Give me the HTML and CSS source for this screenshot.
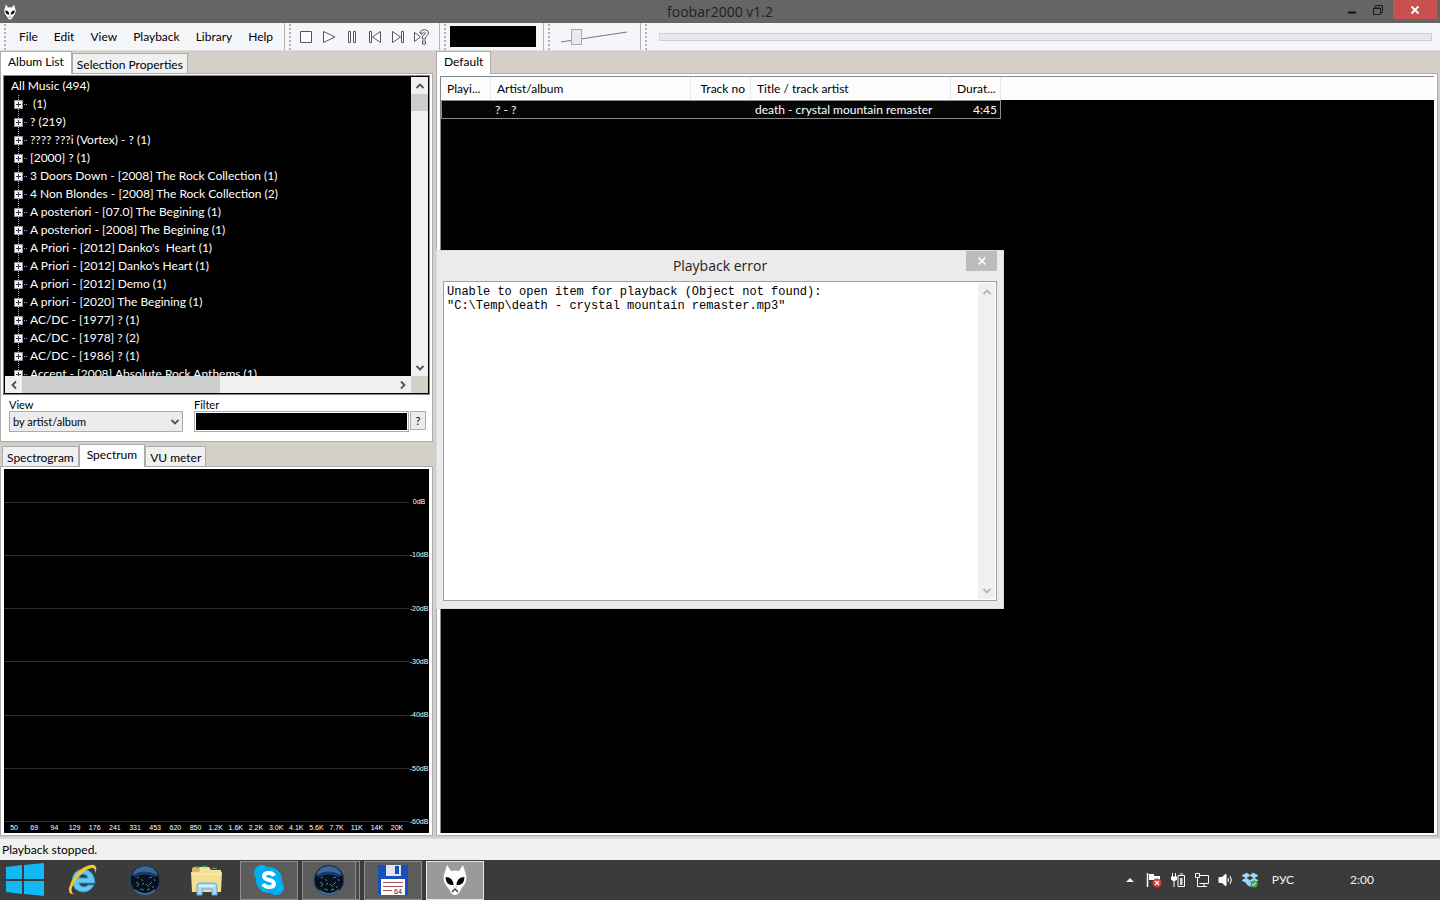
FILE: index.html
```html
<!DOCTYPE html>
<html lang="en">
<head>
  <meta charset="UTF-8" />
  <meta name="viewport" content="width=device-width, initial-scale=1.0"/>
  <title>foobar2000 v1.2</title>
  <link rel="stylesheet" href="styles.css">
</head>
<body>
  <!-- shared icons -->
  <svg class="defs" aria-hidden="true">
    <symbol id="alien" viewBox="0 0 24 30">
      <path d="M4 0 L8 6 Q12 5 16 6 L20 0 L23 10 Q25 17 18 24 Q16 30 12 30 Q8 30 6 24 Q-1 17 1 10Z" fill="#fff"/>
      <path d="M2.500 12 Q10 12 10.500 20 Q3 21 2.500 12Z M21.500 12 Q14 12 13.500 20 Q21 21 21.500 12Z" fill="#000"/>
      <path d="M9 27 L12 24 L15 27" fill="none" stroke="#333" stroke-width="1.300"/>
      <path d="M10.500 22 h.8 M12.800 22 h.8" stroke="#555"/>
    </symbol>
    <symbol id="orb" viewBox="0 0 32 32">
      <circle cx="16" cy="16" r="15" fill="#07101f" stroke="#294966"/>
      <path d="M3 12 Q6 2 16 2 Q26 2 29 12 Q16 5 3 12Z" fill="#39699a"/>
      <path d="M5 12 Q15 6 27 12" fill="none" stroke="#163d68" stroke-width="3"/>
      <path d="M7 18 l3 2 -2 3 M12 15 l2 2 M20 14 l3 -1 M23 18 l-3 3 M11 25 l4 1 M17 20 l3 3 M25 22 l-2 2" fill="none" stroke="#5f7d55"/>
      <path d="M13 21 l2 -2 M8 14 l2 -1 M18 26 l3 -1 M25 15 l1 2" stroke="#6889b4"/>
      <path d="M6 26 Q16 34 26 26" fill="none" stroke="#416b92" stroke-width="2"/>
    </symbol>
    <symbol id="up" viewBox="0 0 10 10"><path d="M1.500 7 L5 3.500 L8.500 7" fill="none" stroke="currentColor" stroke-width="1.800"/></symbol>
    <symbol id="down" viewBox="0 0 10 10"><path d="M1.500 3 L5 6.500 L8.500 3" fill="none" stroke="currentColor" stroke-width="1.800"/></symbol>
    <symbol id="left" viewBox="0 0 10 10"><path d="M7 1.500 L3.500 5 L7 8.500" fill="none" stroke="currentColor" stroke-width="1.800"/></symbol>
    <symbol id="right" viewBox="0 0 10 10"><path d="M3 1.500 L6.500 5 L3 8.500" fill="none" stroke="currentColor" stroke-width="1.800"/></symbol>
  </svg>

  <header class="titlebar">
    <svg class="app-icon"><use href="#alien"/></svg>
    <h1>foobar2000 v1.2</h1>
    <div class="window-buttons">
      <button aria-label="Minimize"><svg width="12" height="12"><path d="M2 8.500 h8" stroke="#111" stroke-width="2"/></svg></button>
      <button aria-label="Restore"><svg width="12" height="12" fill="none" stroke="#1a1a1a"><path d="M3.500 3 V1.500 H10.500 V8.500 H9"/><path d="M1.500 4 h7 v6.500 h-7z M1 4.500 h8"/></svg></button>
      <button class="close" aria-label="Close"><svg width="12" height="12"><path d="M2.500 2.500 l7 7 M9.500 2.500 l-7 7" stroke="#fff" stroke-width="1.800"/></svg></button>
    </div>
  </header>

  <div class="toolbar">
    <nav class="band menu">
      <button>File</button>
      <button>Edit</button>
      <button>View</button>
      <button>Playback</button>
      <button>Library</button>
      <button>Help</button>
    </nav>
    <div class="band transport">
      <button aria-label="Stop"><svg viewBox="0 0 16 16"><path d="M2.500 2.500 h11 v11 h-11z"/></svg></button>
      <button aria-label="Play"><svg viewBox="0 0 16 16"><path d="M2.500 2.500 L14 8 L2.500 13.500z"/></svg></button>
      <button aria-label="Pause"><svg viewBox="0 0 16 16"><path d="M4.500 2.500 h2 v11 h-2z M9.500 2.500 h2 v11 h-2z"/></svg></button>
      <button aria-label="Previous"><svg viewBox="0 0 16 16"><path d="M2.500 2.500 h2 v11 h-2z M13.500 2.500 v11 L5.500 8z"/></svg></button>
      <button aria-label="Next"><svg viewBox="0 0 16 16"><path d="M11.500 2.500 h2 v11 h-2z M2.500 2.500 v11 L10.500 8z"/></svg></button>
      <button aria-label="Random"><svg viewBox="0 0 16 16"><path d="M1.500 3.500 v9 L7.500 8z M6.500 3.500 L9.500 6"/><path d="M7 3.500 Q8 .5 11.500 .5 Q15.500 1 15.500 4 Q15.500 6 12.500 8 V10 H9.500 V8 Q9.500 6.500 12 5 Q13 3.500 11.500 3 Q10 3 9.500 4.500z M9.500 12 h3 v3 h-3z"/></svg></button>
    </div>
    <div class="band vis"><div class="vis-screen"></div></div>
    <div class="band volume">
      <svg viewBox="0 0 68 18"><path d="M1 14 L67 4" stroke="#777"/></svg>
      <input type="range" aria-label="Volume" min="0" max="100" value="19">
    </div>
    <div class="band seek">
      <input type="range" aria-label="Seek" min="0" max="100" value="0">
    </div>
  </div>

  <main class="workspace">
    <aside class="sidebar">
      <section class="panel library">
        <div class="tabs" role="tablist">
          <button class="tab active" role="tab">Album List</button>
          <button class="tab" role="tab">Selection Properties</button>
        </div>
        <div class="page">
          <div class="tree-box">
            <div class="tree">
              <div class="root">All Music (494)</div>
              <ul>
                <li><button aria-label="Expand"></button><span>&nbsp;(1)</span></li>
                <li><button aria-label="Expand"></button><span>? (219)</span></li>
                <li><button aria-label="Expand"></button><span>???? ???i (Vortex) - ? (1)</span></li>
                <li><button aria-label="Expand"></button><span>[2000] ? (1)</span></li>
                <li><button aria-label="Expand"></button><span>3 Doors Down - [2008] The Rock Collection (1)</span></li>
                <li><button aria-label="Expand"></button><span>4 Non Blondes - [2008] The Rock Collection (2)</span></li>
                <li><button aria-label="Expand"></button><span>A posteriori - [07.0] The Begining (1)</span></li>
                <li><button aria-label="Expand"></button><span>A posteriori - [2008] The Begining (1)</span></li>
                <li><button aria-label="Expand"></button><span>A Priori - [2012] Danko's&nbsp; Heart (1)</span></li>
                <li><button aria-label="Expand"></button><span>A Priori - [2012] Danko's Heart (1)</span></li>
                <li><button aria-label="Expand"></button><span>A priori - [2012] Demo (1)</span></li>
                <li><button aria-label="Expand"></button><span>A priori - [2020] The Begining (1)</span></li>
                <li><button aria-label="Expand"></button><span>AC/DC - [1977] ? (1)</span></li>
                <li><button aria-label="Expand"></button><span>AC/DC - [1978] ? (2)</span></li>
                <li><button aria-label="Expand"></button><span>AC/DC - [1986] ? (1)</span></li>
                <li><button aria-label="Expand"></button><span>Accent - [2008] Absolute Rock Anthems (1)</span></li>
              </ul>
            </div>
            <div class="scroll vertical">
              <button aria-label="Scroll up"><svg><use href="#up"/></svg></button>
              <div class="thumb"></div>
              <button class="end" aria-label="Scroll down"><svg><use href="#down"/></svg></button>
            </div>
            <div class="scroll horizontal">
              <button aria-label="Scroll left"><svg><use href="#left"/></svg></button>
              <div class="thumb"></div>
              <button class="end" aria-label="Scroll right"><svg><use href="#right"/></svg></button>
            </div>
            <div class="corner"></div>
          </div>
          <form class="filter-form">
            <div class="field view-field">
              <label for="view">View</label>
              <div class="select-wrap">
                <select id="view"><option>by artist/album</option></select>
                <svg><use href="#down"/></svg>
              </div>
            </div>
            <div class="field filter-field">
              <label for="filter">Filter</label>
              <div class="filter-row">
                <input type="text" id="filter">
                <button type="button">?</button>
              </div>
            </div>
          </form>
        </div>
      </section>

      <section class="panel analysis">
        <div class="tabs" role="tablist">
          <button class="tab" role="tab">Spectrogram</button>
          <button class="tab active" role="tab">Spectrum</button>
          <button class="tab" role="tab">VU meter</button>
        </div>
        <div class="page">
          <div class="spectrum">
            <div class="levels">
              <div>0dB</div>
              <div>-10dB</div>
              <div>-20dB</div>
              <div>-30dB</div>
              <div>-40dB</div>
              <div>-50dB</div>
              <div>-60dB</div>
            </div>
            <div class="freqs">
              <span>50</span><span>69</span><span>94</span><span>129</span><span>176</span><span>241</span><span>331</span><span>453</span><span>620</span><span>850</span><span>1.2K</span><span>1.6K</span><span>2.2K</span><span>3.0K</span><span>4.1K</span><span>5.6K</span><span>7.7K</span><span>11K</span><span>14K</span><span>20K</span>
            </div>
          </div>
        </div>
      </section>
    </aside>

    <section class="panel playlist">
      <div class="tabs" role="tablist">
        <button class="tab active" role="tab">Default</button>
      </div>
      <div class="page">
        <div class="tracks">
          <table>
            <colgroup><col class="c-playing"><col class="c-wide"><col class="c-no"><col class="c-wide"><col class="c-time"><col></colgroup>
            <thead>
              <tr><th>Playi...</th><th>Artist/album</th><th class="num">Track no</th><th>Title / track artist</th><th class="num">Durat...</th><th></th></tr>
            </thead>
            <tbody>
              <tr><td></td><td>? - ?</td><td></td><td>death - crystal mountain remaster</td><td class="num">4:45</td><td></td></tr>
            </tbody>
          </table>
        </div>
      </div>
    </section>

    <div class="dialog" role="dialog" aria-labelledby="dialogTitle">
      <div class="dialog-title">
        <h2 id="dialogTitle">Playback error</h2>
        <button aria-label="Close"><svg width="10" height="10"><path d="M1.500 1.500 l7 7 M8.500 1.500 l-7 7" stroke="#fff" stroke-width="1.600"/></svg></button>
      </div>
      <div class="message">
        <pre>Unable to open item for playback (Object not found):
"C:\Temp\death - crystal mountain remaster.mp3"</pre>
        <div class="scroll vertical disabled">
          <button aria-label="Scroll up"><svg><use href="#up"/></svg></button>
          <button class="end" aria-label="Scroll down"><svg><use href="#down"/></svg></button>
        </div>
      </div>
    </div>
  </main>

  <footer class="status">Playback stopped.</footer>

  <div class="taskbar">
    <div class="launch">
      <button class="start" aria-label="Start">
        <svg width="40" height="34" viewBox="0 0 40 34" fill="#12b9f5"><path d="M1 4 L17 2 V16 H1z M19 2 L39 0 V16 H19z M1 18 H17 V31 L1 29z M19 18 H39 V33 L19 31z"/></svg>
      </button>
      <button aria-label="Internet Explorer">
        <svg width="34" height="34" viewBox="0 0 34 34">
          <path d="M28 22 Q24 29 17 29 Q7 28 6 18 Q7 7 17 6 Q28 7 29 20 H13 Q14 24 18 24 Q21 24 22 22z M13 15 H22 Q21 11 17 11 Q14 11 13 15z" fill="#61c9f3" fill-rule="evenodd" stroke="#2a9bd6"/>
          <path d="M8 31 Q2 32 3 25 Q6 13 17 5 Q28 -1 30 4 Q31 7 29 11 Q30 4 25 5 Q15 8 8 20 Q3 29 8 31z" fill="#f7c52b"/>
        </svg>
      </button>
      <button aria-label="Browser"><svg width="32" height="32"><use href="#orb"/></svg></button>
      <button aria-label="File Explorer">
        <svg width="34" height="32" viewBox="0 0 34 32">
          <path d="M3 3 h10 l2 3 h5 v22 H2 V5z" fill="#d9b85f"/>
          <path d="M10 3 h9 l2 3 h10 v4 H9z" fill="#f6dfa0"/>
          <path d="M5 3 h4 M12 2.500 h5 M22 4.500 h5" stroke="#3d9a4e" stroke-width="1.500"/>
          <path d="M1 8 H32 L31 28 H2z" fill="#f5df94"/>
          <path d="M2 10 H31" stroke="#fff3c5"/>
          <path d="M7 31 V22 Q7 19 10 19 H24 Q27 19 27 22 V31 H22 V25 H12 V31z" fill="#a7dcf3" stroke="#62a9ce"/>
          <path d="M9 22 h16" stroke="#e8f8ff" stroke-width="1.500"/>
        </svg>
      </button>
      <button class="running" aria-label="Skype">
        <svg width="32" height="32" viewBox="0 0 32 32"><circle cx="16" cy="16" r="13" fill="#00aff0"/><circle cx="9" cy="9" r="8" fill="#00aff0"/><circle cx="23" cy="23" r="8" fill="#00aff0"/><path d="M21 12 Q20 9 16 9 Q11 9 11 12 Q11 15 16 16 Q21 17 21 20 Q21 23 16 23 Q12 23 10 20" fill="none" stroke="#fff" stroke-width="4"/></svg>
      </button>
      <button class="running stacked" aria-label="Browser windows"><svg width="32" height="32"><use href="#orb"/></svg></button>
      <button class="running" aria-label="Total Commander">
        <svg width="32" height="32" viewBox="0 0 32 32">
          <path d="M1 1 H31 V31 H3 L1 29z" fill="#1550c0"/>
          <path d="M9 1 H24 V12 H9z" fill="#dfe5ee"/><path d="M18 2 h4 v8 h-4z" fill="#1550c0"/>
          <path d="M4 15 H28 V31 H4z" fill="#fff"/><path d="M6 18.500 H26 M6 22.500 H26 M6 26.500 H15" stroke="#a34e58"/>
          <text x="17" y="30" font-family="Liberation Sans" font-size="7" fill="#222">64</text>
        </svg>
      </button>
      <button class="running current" aria-label="foobar2000"><svg width="24" height="30"><use href="#alien"/></svg></button>
    </div>
    <div class="tray">
      <button aria-label="Show hidden icons"><svg viewBox="0 0 16 16"><path d="M4 10 L8 6 L12 10z" fill="#eee"/></svg></button>
      <button aria-label="Action Center"><svg viewBox="0 0 16 16"><path d="M1.500 1 V15" stroke="#fff" stroke-width="1.500"/><path d="M3 2 H8 V4 H14 V10 H8 V8 H3z" fill="#fff"/><circle cx="11" cy="11" r="4.500" fill="#d83b3b"/><path d="M9 9 l4 4 M13 9 l-4 4" stroke="#fff" stroke-width="1.300"/></svg></button>
      <button aria-label="Battery"><svg viewBox="0 0 16 16" fill="none" stroke="#fff"><path d="M8 3.500 h6.500 v11 H8z M10 2 h3"/><path d="M10 6 h2.500 v7 h-2.500z" fill="#ddd" stroke="none"/><path d="M2.500 1 v4 M5.500 1 v4 M4 9 v6"/><path d="M1 4.500 h6 v3 L5 9 H3 L1 7.500z" fill="#fff" stroke="none"/></svg></button>
      <button aria-label="Network"><svg viewBox="0 0 16 16" fill="none" stroke="#fff"><path d="M6 3.500 H14.500 V11.500 H5.500 M10 12 V14 M6 14.500 H13"/><path d="M1.500 1.500 h4 v4 h-4z M3.500 6 V14.500 H6"/></svg></button>
      <button aria-label="Volume"><svg viewBox="0 0 16 16" fill="none" stroke="#fff"><path d="M1 5.500 H4 L8 2 V14 L4 10.500 H1z" fill="#fff"/><path d="M10 6 Q11.500 8 10 10 M12 4 Q15 8 12 12" /></svg></button>
      <button aria-label="Dropbox"><svg viewBox="0 0 16 16"><path d="M5 1 L8 3.500 L4 6 L0 3.500z M11 1 L16 3.500 L12 6 L8 3.500z M4 6 L8 8.500 L5 11 L0 8.500z M12 6 L16 8.500 L11 11 L8 8.500z M4 11.500 L8 9.500 L12 11.500 L8 14.500z" fill="#9bdcff" stroke="#9bdcff" stroke-width=".6"/><circle cx="12" cy="12" r="3.500" fill="#43aa3c"/><path d="M10 12 l1.500 1.500 L14 10.500" fill="none" stroke="#fff"/></svg></button>
      <button class="lang">РУС</button>
      <time>2:00</time>
    </div>
  </div>
</body>
</html>
```
FILE: styles.css
```css
* {
  box-sizing: border-box;
}

body {
  margin: 0;
  height: 100vh;
  display: flex;
  flex-direction: column;
  overflow: hidden;
  background: #d4d0c8;
  font-family: Lato, "Open Sans", sans-serif;
  font-size: 12px;
  line-height: 16px;
  color: #000;
}

button, input, select {
  font: inherit;
  color: inherit;
  margin: 0;
  padding: 0;
  border: none;
  border-radius: 0;
  background: none;
}

svg {
  display: block;
}

.defs {
  position: absolute;
  width: 0;
  height: 0;
}

/* title bar */
.titlebar {
  display: grid;
  grid-template-columns: 1fr auto 1fr;
  align-items: center;
  height: 23px;
  flex: none;
  background: #656565;
}

.titlebar h1, .dialog-title h2 {
  margin: 0;
  font-family: "Open Sans", sans-serif;
  font-size: 14px;
  font-weight: normal;
  color: #222;
}

.app-icon {
  width: 12px;
  height: 16px;
  margin-left: 4px;
}

.window-buttons {
  display: flex;
  justify-content: flex-end;
  align-self: start;
  padding-right: 3px;
}

.window-buttons button {
  width: 26px;
  height: 19px;
  display: flex;
  align-items: center;
  justify-content: center;
}

.window-buttons .close {
  width: 44px;
  margin-left: 2px;
  background: #c75050;
}

/* toolbar */
.toolbar {
  display: flex;
  height: 28px;
  flex: none;
  background: #f5f6fa;
  border-bottom: 1px solid #dcdcd8;
}

.band {
  display: flex;
  align-items: center;
  padding-left: 4px;
  border-right: 1px solid #b5b5b8;
}

.band::before {
  content: "";
  width: 2px;
  height: 26px;
  flex: none;
  background: repeating-linear-gradient(#b4b4b8 0 2px, transparent 2px 4px);
}

.menu {
  width: 285px;
}

.menu button {
  padding: 0 8px;
}

.menu button:first-of-type {
  margin-left: 5px;
}

.transport {
  width: 155px;
}

.transport button {
  width: 23px;
  height: 24px;
  display: flex;
  align-items: center;
  justify-content: center;
}

.transport button:first-of-type {
  margin-left: 3px;
}

.transport svg {
  width: 16px;
  height: 16px;
  fill: #fdfdff;
  stroke: #55565c;
}

.vis {
  width: 104px;
}

.vis-screen {
  width: 86px;
  height: 21px;
  margin-left: 4px;
  background: #000;
}

.volume {
  width: 97px;
  display: grid;
  grid-template-columns: 2px 68px;
  column-gap: 10px;
}

.volume svg, .volume input {
  grid-area: 1 / 2;
  width: 68px;
  height: 18px;
}

.volume input, .seek input {
  appearance: none;
}

.volume input::-webkit-slider-thumb {
  appearance: none;
  width: 11px;
  height: 16px;
  background: #e9e9ec;
  border: 1px solid #a9a9ad;
}

.seek {
  flex: 1;
  border-right: none;
  padding-right: 8px;
}

.seek input {
  flex: 1;
  height: 8px;
  margin-left: 12px;
  background: #e7e8eb;
  border: 1px solid #cfd0d4;
}

.seek input::-webkit-slider-thumb {
  appearance: none;
  width: 1px;
  height: 6px;
}

/* panels */
.workspace {
  position: relative;
  display: flex;
  gap: 3px;
  flex: 1;
  min-height: 0;
  padding-bottom: 2px;
}

.sidebar {
  width: 433px;
  flex: none;
  display: flex;
  flex-direction: column;
  gap: 2px;
}

.panel {
  display: flex;
  flex-direction: column;
}

.library {
  height: 391px;
}

.analysis, .playlist {
  flex: 1;
  min-height: 0;
}

.playlist {
  min-width: 0;
  padding-right: 2px;
}

.tabs {
  display: flex;
  align-items: flex-end;
  height: 23px;
  flex: none;
}

.analysis .tabs {
  padding-left: 2px;
}

.tab {
  height: 21px;
  padding: 2px 4px 0;
  background: #f0f0f0;
  border: 1px solid #acacac;
  border-bottom: none;
}

.tab.active {
  height: 23px;
  padding: 0 7px 2px;
  background: #fff;
  position: relative;
  z-index: 1;
}

.page {
  flex: 1;
  min-height: 0;
  display: flex;
  flex-direction: column;
  margin-top: -1px;
  padding: 2px 3px;
  background: #fff;
  border: 1px solid #acacac;
}

/* album tree */
.tree-box {
  flex: 1;
  min-height: 0;
  display: grid;
  grid-template: 1fr 17px / 1fr 17px;
  background: #000;
  border: 1px solid #000;
  outline: 1px solid #828790;
}

.tree {
  min-height: 0;
  overflow: hidden;
  padding-left: 6px;
  color: #fff;
  line-height: 18px;
  white-space: nowrap;
}

.tree ul {
  margin: 0 0 0 7px;
  padding: 0;
  list-style: none;
  background: repeating-linear-gradient(#aaa 0 1px, #000 1px 2px) 0 0 / 1px 100% no-repeat;
}

.tree li {
  display: flex;
  align-items: center;
  gap: 7px;
  height: 18px;
  margin-left: -4px;
  background: repeating-linear-gradient(90deg, #aaa 0 1px, transparent 1px 2px) 10px 9px / 4px 1px no-repeat;
}

.tree li button {
  width: 9px;
  height: 9px;
  border: 1px solid #919191;
  background:
    linear-gradient(#33394a, #33394a) 1px 3px / 5px 1px no-repeat,
    linear-gradient(#33394a, #33394a) 3px 1px / 1px 5px no-repeat,
    #f4f4f4;
}

.scroll {
  display: flex;
  background: #f0f0f0;
  color: #505050;
}

.scroll button {
  width: 17px;
  height: 17px;
  flex: none;
  display: flex;
  align-items: center;
  justify-content: center;
}

.scroll svg {
  width: 10px;
  height: 10px;
}

.scroll .end {
  margin: auto 0 0 auto;
}

.vertical {
  flex-direction: column;
}

.thumb {
  background: #cdcdcd;
}

.vertical .thumb {
  height: 17px;
}

.horizontal .thumb {
  width: 198px;
}

.disabled {
  color: #b5b5b5;
}

.corner {
  background: #d4d0c8;
}

.filter-form {
  display: flex;
  gap: 11px;
  padding: 4px 3px 6px 5px;
  height: 45px;
  font-size: 11px;
}

.field label {
  display: block;
  line-height: 13px;
}

.view-field {
  width: 174px;
}

.select-wrap {
  display: grid;
  align-items: center;
}

.select-wrap select {
  grid-area: 1 / 1;
  appearance: none;
  height: 21px;
  padding: 0 3px;
  background: #ececec;
  border: 1px solid #acacac;
}

.select-wrap svg {
  grid-area: 1 / 1;
  justify-self: end;
  width: 10px;
  height: 10px;
  margin-right: 3px;
  color: #555;
  pointer-events: none;
}

.filter-field {
  flex: 1;
}

.filter-row {
  display: flex;
  align-items: flex-start;
  gap: 1px;
}

.filter-row input {
  flex: 1;
  min-width: 0;
  height: 21px;
  background: #000;
  color: #fff;
  border: 1px solid #abadb3;
  box-shadow: inset 0 0 0 1px #fff;
}

.filter-row button {
  width: 16px;
  height: 19px;
  background: #ececec;
  border: 1px solid #acacac;
}

/* spectrum */
.spectrum {
  flex: 1;
  display: flex;
  flex-direction: column;
  padding: 31px 0 2px;
  background: #000;
  color: #fff;
  font-family: "Liberation Sans", sans-serif;
  font-size: 7px;
}

.levels {
  flex: 1;
  display: flex;
  flex-direction: column;
  justify-content: space-between;
}

.levels div {
  display: grid;
  grid-template-columns: 1fr 20px;
  align-items: center;
  height: 4px;
  line-height: 4px;
  text-align: center;
}

.levels div::before {
  content: "";
  height: 1px;
  background: #303030;
}

.freqs {
  display: flex;
  margin-right: 22px;
  line-height: 7px;
}

.freqs span {
  flex: 1;
  text-align: center;
}

/* playlist */
.tracks {
  flex: 1;
  background: #000;
  border-top: 1px solid #828790;
  border-left: 1px solid #828790;
}

.tracks table {
  width: 100%;
  table-layout: fixed;
  border-collapse: separate;
  border-spacing: 0;
}

.c-playing, .c-time {
  width: 50px;
}

.c-wide {
  width: 200px;
}

.c-no {
  width: 60px;
}

.tracks th {
  height: 23px;
  padding: 0 5px 0 6px;
  background: #fcfcfc;
  border-right: 1px solid #e8e8ec;
  font-weight: normal;
  text-align: left;
  white-space: nowrap;
}

.tracks th:last-child {
  border-right: none;
}

.tracks td {
  height: 19px;
  padding: 0 3px 0 4px;
  color: #fff;
  background: #060606;
  border: solid #8a8a8a;
  border-width: 1px 0;
  white-space: nowrap;
}

.tracks td:first-child {
  border-left-width: 1px;
}

.tracks td:nth-child(5) {
  border-right-width: 1px;
}

.tracks td:last-child {
  background: none;
  border: none;
}

.tracks .num {
  text-align: right;
}

/* error dialog */
.dialog {
  position: absolute;
  left: 436px;
  top: 199px;
  width: 568px;
  height: 359px;
  z-index: 2;
  display: flex;
  flex-direction: column;
  padding: 0 6px 7px;
  background: #ebebeb;
  border: 1px solid #dcdcdc;
}

.dialog-title {
  display: grid;
  grid-template-columns: 1fr auto 1fr;
  align-items: center;
  height: 30px;
}

.dialog-title h2 {
  grid-column: 2;
}

.dialog-title button {
  width: 31px;
  height: 20px;
  display: flex;
  align-items: center;
  justify-content: center;
  place-self: start end;
  background: #bcbcbc;
}

.message {
  flex: 1;
  display: flex;
  justify-content: space-between;
  padding: 1px;
  background: #fff;
  border: 1px solid #a0a0a0;
}

.message pre {
  margin: 0;
  padding: 2px;
  font-family: "Liberation Mono", monospace;
  font-size: 12px;
  line-height: 14px;
}

/* status and taskbar */
.status {
  flex: none;
  height: 22px;
  padding: 3px 2px;
  background: #f0f0f0;
  border-top: 1px solid #dcdcdc;
}

.taskbar {
  flex: none;
  display: flex;
  justify-content: space-between;
  height: 40px;
  background: #3b3b3b;
}

.launch {
  display: flex;
  align-items: center;
  gap: 4px;
}

.launch button {
  width: 58px;
  height: 39px;
  display: flex;
  align-items: center;
  justify-content: center;
}

.launch .start {
  width: 50px;
}

.launch .running {
  background: #5c5c5c;
  border: 1px solid #8f8f8f;
}

.launch .stacked {
  padding-right: 5px;
  background: linear-gradient(90deg, transparent 52px, #8f8f8f 52px 53px, #484848 53px), #5c5c5c;
}

.launch .current {
  background: #9a9a9a;
  border-color: #e6e6e6;
}

.tray {
  display: flex;
  align-items: center;
  padding-right: 66px;
  color: #f0f0f0;
}

.tray button {
  width: 24px;
  display: flex;
  justify-content: center;
}

.tray svg {
  width: 16px;
  height: 16px;
}

.tray .lang {
  width: auto;
  margin: 0 56px 0 10px;
}
```
